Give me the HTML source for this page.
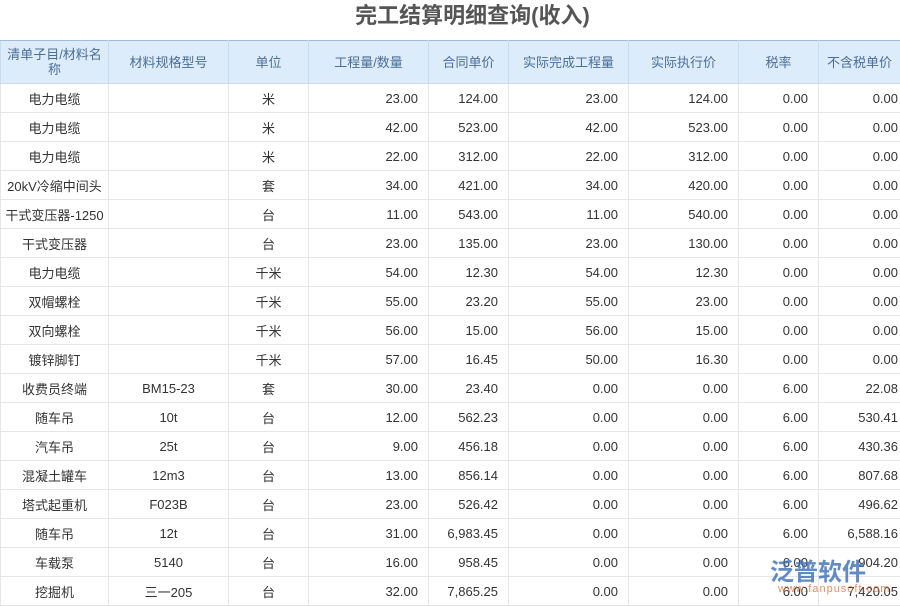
<!DOCTYPE html>
<html><head><meta charset="utf-8"><style>
body{margin:0;width:900px;height:600px;overflow:hidden;background:#fff;font-family:"Liberation Sans","Noto Sans CJK SC",sans-serif;}
h1{margin:0;position:absolute;top:1px;left:0;width:945px;text-align:center;font-size:22px;line-height:30px;color:#555;font-weight:bold;}
table{position:absolute;top:40px;left:0;border-collapse:collapse;table-layout:fixed;width:900px;font-size:13px;color:#333;}
th{background:#dcecfb;color:#4b6e96;font-weight:normal;height:42px;border:1px solid #c6dcef;border-top:1px solid #9fbdd6;padding:0 2px;line-height:15px;text-align:center;}
td{height:28px;border:1px solid #e6e6e6;padding:0 10px;white-space:nowrap;overflow:hidden;}
td:first-child{padding:0 2px;}
.c{text-align:center}.r{text-align:right}
.wm{position:absolute;left:770px;top:552px;color:#3d6fb5;font-size:24px;font-weight:bold;opacity:.8}
.wm2{position:absolute;left:778px;top:583px;color:#e07040;font-size:11px;opacity:.8;letter-spacing:1px}
</style></head><body>
<h1>完工结算明细查询(收入)</h1>
<table>
<colgroup><col style="width:108px"><col style="width:120px"><col style="width:80px"><col style="width:120px"><col style="width:80px"><col style="width:120px"><col style="width:110px"><col style="width:80px"><col style="width:82px"></colgroup>
<tr><th>清单子目/材料名称</th><th>材料规格型号</th><th>单位</th><th>工程量/数量</th><th>合同单价</th><th>实际完成工程量</th><th>实际执行价</th><th>税率</th><th>不含税单价</th></tr>
<tr><td class="c">电力电缆</td><td></td><td class="c">米</td><td class="r">23.00</td><td class="r">124.00</td><td class="r">23.00</td><td class="r">124.00</td><td class="r">0.00</td><td class="r" style="padding-right:2px">0.00</td></tr>
<tr><td class="c">电力电缆</td><td></td><td class="c">米</td><td class="r">42.00</td><td class="r">523.00</td><td class="r">42.00</td><td class="r">523.00</td><td class="r">0.00</td><td class="r" style="padding-right:2px">0.00</td></tr>
<tr><td class="c">电力电缆</td><td></td><td class="c">米</td><td class="r">22.00</td><td class="r">312.00</td><td class="r">22.00</td><td class="r">312.00</td><td class="r">0.00</td><td class="r" style="padding-right:2px">0.00</td></tr>
<tr><td class="c">20kV冷缩中间头</td><td></td><td class="c">套</td><td class="r">34.00</td><td class="r">421.00</td><td class="r">34.00</td><td class="r">420.00</td><td class="r">0.00</td><td class="r" style="padding-right:2px">0.00</td></tr>
<tr><td class="c">干式变压器-1250</td><td></td><td class="c">台</td><td class="r">11.00</td><td class="r">543.00</td><td class="r">11.00</td><td class="r">540.00</td><td class="r">0.00</td><td class="r" style="padding-right:2px">0.00</td></tr>
<tr><td class="c">干式变压器</td><td></td><td class="c">台</td><td class="r">23.00</td><td class="r">135.00</td><td class="r">23.00</td><td class="r">130.00</td><td class="r">0.00</td><td class="r" style="padding-right:2px">0.00</td></tr>
<tr><td class="c">电力电缆</td><td></td><td class="c">千米</td><td class="r">54.00</td><td class="r">12.30</td><td class="r">54.00</td><td class="r">12.30</td><td class="r">0.00</td><td class="r" style="padding-right:2px">0.00</td></tr>
<tr><td class="c">双帽螺栓</td><td></td><td class="c">千米</td><td class="r">55.00</td><td class="r">23.20</td><td class="r">55.00</td><td class="r">23.00</td><td class="r">0.00</td><td class="r" style="padding-right:2px">0.00</td></tr>
<tr><td class="c">双向螺栓</td><td></td><td class="c">千米</td><td class="r">56.00</td><td class="r">15.00</td><td class="r">56.00</td><td class="r">15.00</td><td class="r">0.00</td><td class="r" style="padding-right:2px">0.00</td></tr>
<tr><td class="c">镀锌脚钉</td><td></td><td class="c">千米</td><td class="r">57.00</td><td class="r">16.45</td><td class="r">50.00</td><td class="r">16.30</td><td class="r">0.00</td><td class="r" style="padding-right:2px">0.00</td></tr>
<tr><td class="c">收费员终端</td><td class="c">BM15-23</td><td class="c">套</td><td class="r">30.00</td><td class="r">23.40</td><td class="r">0.00</td><td class="r">0.00</td><td class="r">6.00</td><td class="r" style="padding-right:2px">22.08</td></tr>
<tr><td class="c">随车吊</td><td class="c">10t</td><td class="c">台</td><td class="r">12.00</td><td class="r">562.23</td><td class="r">0.00</td><td class="r">0.00</td><td class="r">6.00</td><td class="r" style="padding-right:2px">530.41</td></tr>
<tr><td class="c">汽车吊</td><td class="c">25t</td><td class="c">台</td><td class="r">9.00</td><td class="r">456.18</td><td class="r">0.00</td><td class="r">0.00</td><td class="r">6.00</td><td class="r" style="padding-right:2px">430.36</td></tr>
<tr><td class="c">混凝土罐车</td><td class="c">12m3</td><td class="c">台</td><td class="r">13.00</td><td class="r">856.14</td><td class="r">0.00</td><td class="r">0.00</td><td class="r">6.00</td><td class="r" style="padding-right:2px">807.68</td></tr>
<tr><td class="c">塔式起重机</td><td class="c">F023B</td><td class="c">台</td><td class="r">23.00</td><td class="r">526.42</td><td class="r">0.00</td><td class="r">0.00</td><td class="r">6.00</td><td class="r" style="padding-right:2px">496.62</td></tr>
<tr><td class="c">随车吊</td><td class="c">12t</td><td class="c">台</td><td class="r">31.00</td><td class="r">6,983.45</td><td class="r">0.00</td><td class="r">0.00</td><td class="r">6.00</td><td class="r" style="padding-right:2px">6,588.16</td></tr>
<tr><td class="c">车载泵</td><td class="c">5140</td><td class="c">台</td><td class="r">16.00</td><td class="r">958.45</td><td class="r">0.00</td><td class="r">0.00</td><td class="r">6.00</td><td class="r" style="padding-right:2px">904.20</td></tr>
<tr><td class="c">挖掘机</td><td class="c">三一205</td><td class="c">台</td><td class="r">32.00</td><td class="r">7,865.25</td><td class="r">0.00</td><td class="r">0.00</td><td class="r">6.00</td><td class="r" style="padding-right:2px">7,420.05</td></tr>
</table>
<div class="wm">泛普软件</div>
<div class="wm2">www.fanpusoft.com</div>
</body></html>
